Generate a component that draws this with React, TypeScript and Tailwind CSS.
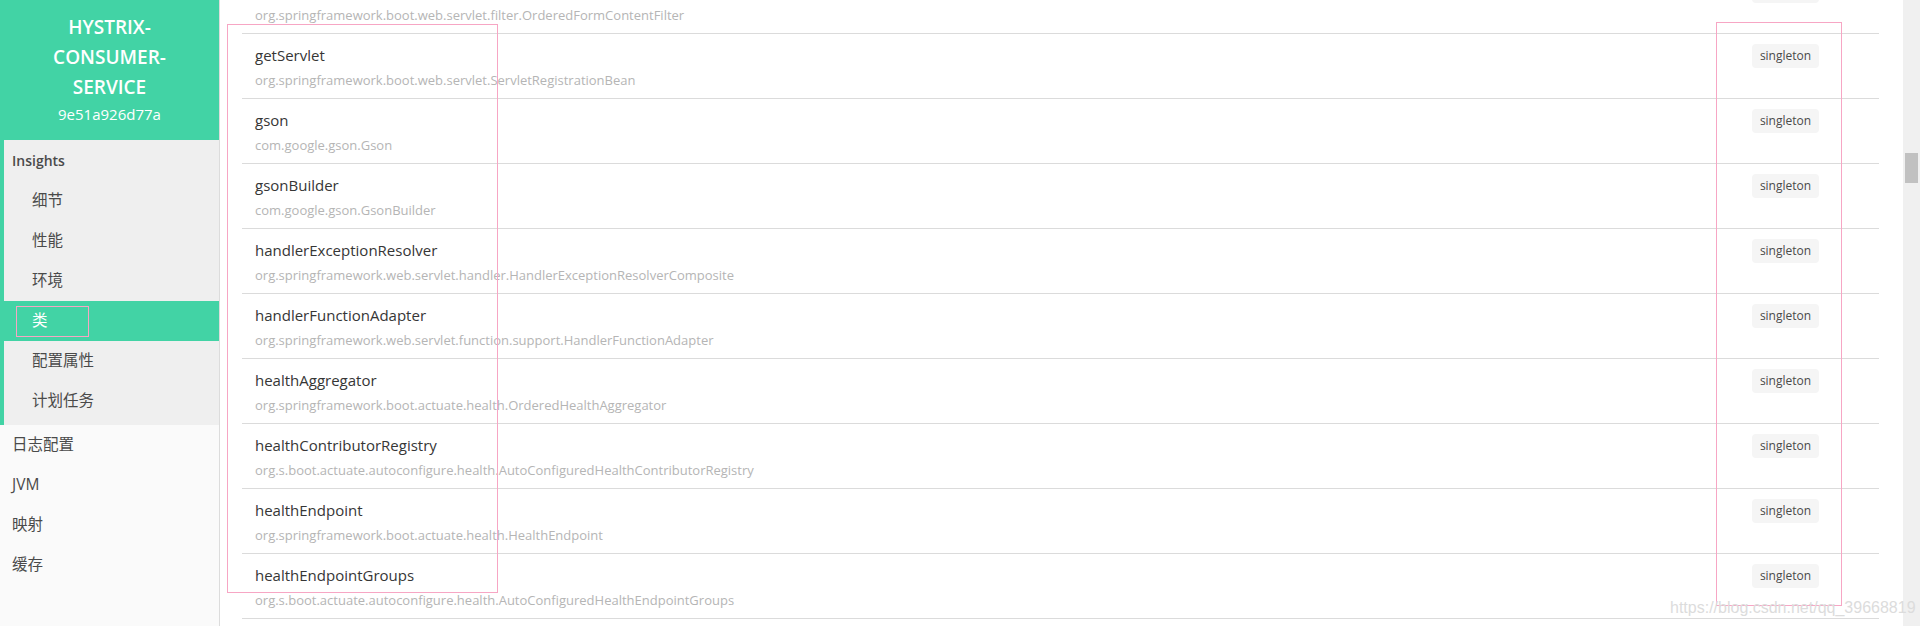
import React from "react";

const rows: { name: string; cls: string }[] = [
  { name: "formContentFilter", cls: "org.springframework.boot.web.servlet.filter.OrderedFormContentFilter" },
  { name: "getServlet", cls: "org.springframework.boot.web.servlet.ServletRegistrationBean" },
  { name: "gson", cls: "com.google.gson.Gson" },
  { name: "gsonBuilder", cls: "com.google.gson.GsonBuilder" },
  { name: "handlerExceptionResolver", cls: "org.springframework.web.servlet.handler.HandlerExceptionResolverComposite" },
  { name: "handlerFunctionAdapter", cls: "org.springframework.web.servlet.function.support.HandlerFunctionAdapter" },
  { name: "healthAggregator", cls: "org.springframework.boot.actuate.health.OrderedHealthAggregator" },
  { name: "healthContributorRegistry", cls: "org.s.boot.actuate.autoconfigure.health.AutoConfiguredHealthContributorRegistry" },
  { name: "healthEndpoint", cls: "org.springframework.boot.actuate.health.HealthEndpoint" },
  { name: "healthEndpointGroups", cls: "org.s.boot.actuate.autoconfigure.health.AutoConfiguredHealthEndpointGroups" },
];

const subItems = ["细节", "性能", "环境", "类", "配置属性", "计划任务"];
const lowerItems = ["日志配置", "JVM", "映射", "缓存"];

export default function App() {
  return (
    <div
      className="relative flex h-[626px] w-[1920px] overflow-hidden bg-white"
      style={{ fontFamily: '"Open Sans", "Noto Sans CJK SC", sans-serif' }}
    >
      {/* Sidebar */}
      <aside className="flex w-[220px] shrink-0 flex-col border-r border-[#dcdcdc] bg-[#fafafa]">
        <div className="flex h-[140px] flex-col items-center justify-center bg-[#42d3a5] pb-[2px] text-white">
          <div className="text-center text-[19px] font-semibold leading-[30px]">
            HYSTRIX-
            <br />
            CONSUMER-
            <br />
            SERVICE
          </div>
          <div className="text-[15px] leading-[24px]">9e51a926d77a</div>
        </div>
        <div className="border-l-4 border-[#42d3a5] bg-[#efefef] pb-[4px]">
          <div className="flex h-[41px] items-center pl-[8px] text-[14px] font-semibold text-[#4a4a4a]">Insights</div>
          {subItems.map((s) =>
            s === "类" ? (
              <div key={s} className="relative flex h-[40px] items-center bg-[#42d3a5] pl-[28px] text-[15.5px] text-white">
                {s}
                <div className="absolute left-[12px] top-[5px] h-[31px] w-[73px] border border-[#f7a6c4]" />
              </div>
            ) : (
              <div key={s} className="flex h-[40px] items-center pl-[28px] text-[15.5px] text-[#4a4a4a]">
                {s}
              </div>
            )
          )}
        </div>
        {lowerItems.map((s) => (
          <div key={s} className="flex h-[40px] items-center pl-[12px] text-[15.5px] text-[#4a4a4a]">
            {s}
          </div>
        ))}
      </aside>

      {/* Main */}
      <main className="relative flex-1 overflow-hidden">
        <div className="-mt-[31px] pl-[22px] pr-[24px]">
          {rows.map((r, i) => (
            <div key={i} className="flex h-[65px] items-start justify-between border-b border-[#dbdbdb] pl-[13px] pr-[60px]">
              <div className="pt-[9px]">
                <div className="text-[15px] leading-[24px] text-[#363636]">{r.name}</div>
                <div className="mt-[3px] text-[13px] leading-[20px] text-[#b5b5b5]">{r.cls}</div>
              </div>
              <div className="mt-[10px] flex h-[24px] w-[67px] items-center justify-center rounded-[4px] bg-[#f5f5f5] text-[12px] text-[#4a4a4a]">
                singleton
              </div>
            </div>
          ))}
        </div>
      </main>

      {/* Scrollbar */}
      <div className="relative w-[17px] shrink-0 bg-[#f0f0f0]">
        <div className="absolute left-[2px] top-[153px] h-[30px] w-[13px] bg-[#c1c1c1]" />
      </div>

      {/* Annotation boxes */}
      <div className="pointer-events-none absolute left-[227px] top-[24px] h-[569px] w-[271px] border border-[#f7a6c4]" />
      <div className="pointer-events-none absolute left-[1716px] top-[22px] h-[584px] w-[126px] border border-[#f7a6c4]" />

      {/* Watermark */}
      <div
        className="pointer-events-none absolute left-[1670px] top-[596px] text-[16px] text-[#dcdcdc]"
        style={{ fontFamily: '"Liberation Sans", sans-serif' }}
      >
        https://blog.csdn.net/qq_39668819
      </div>
    </div>
  );
}
